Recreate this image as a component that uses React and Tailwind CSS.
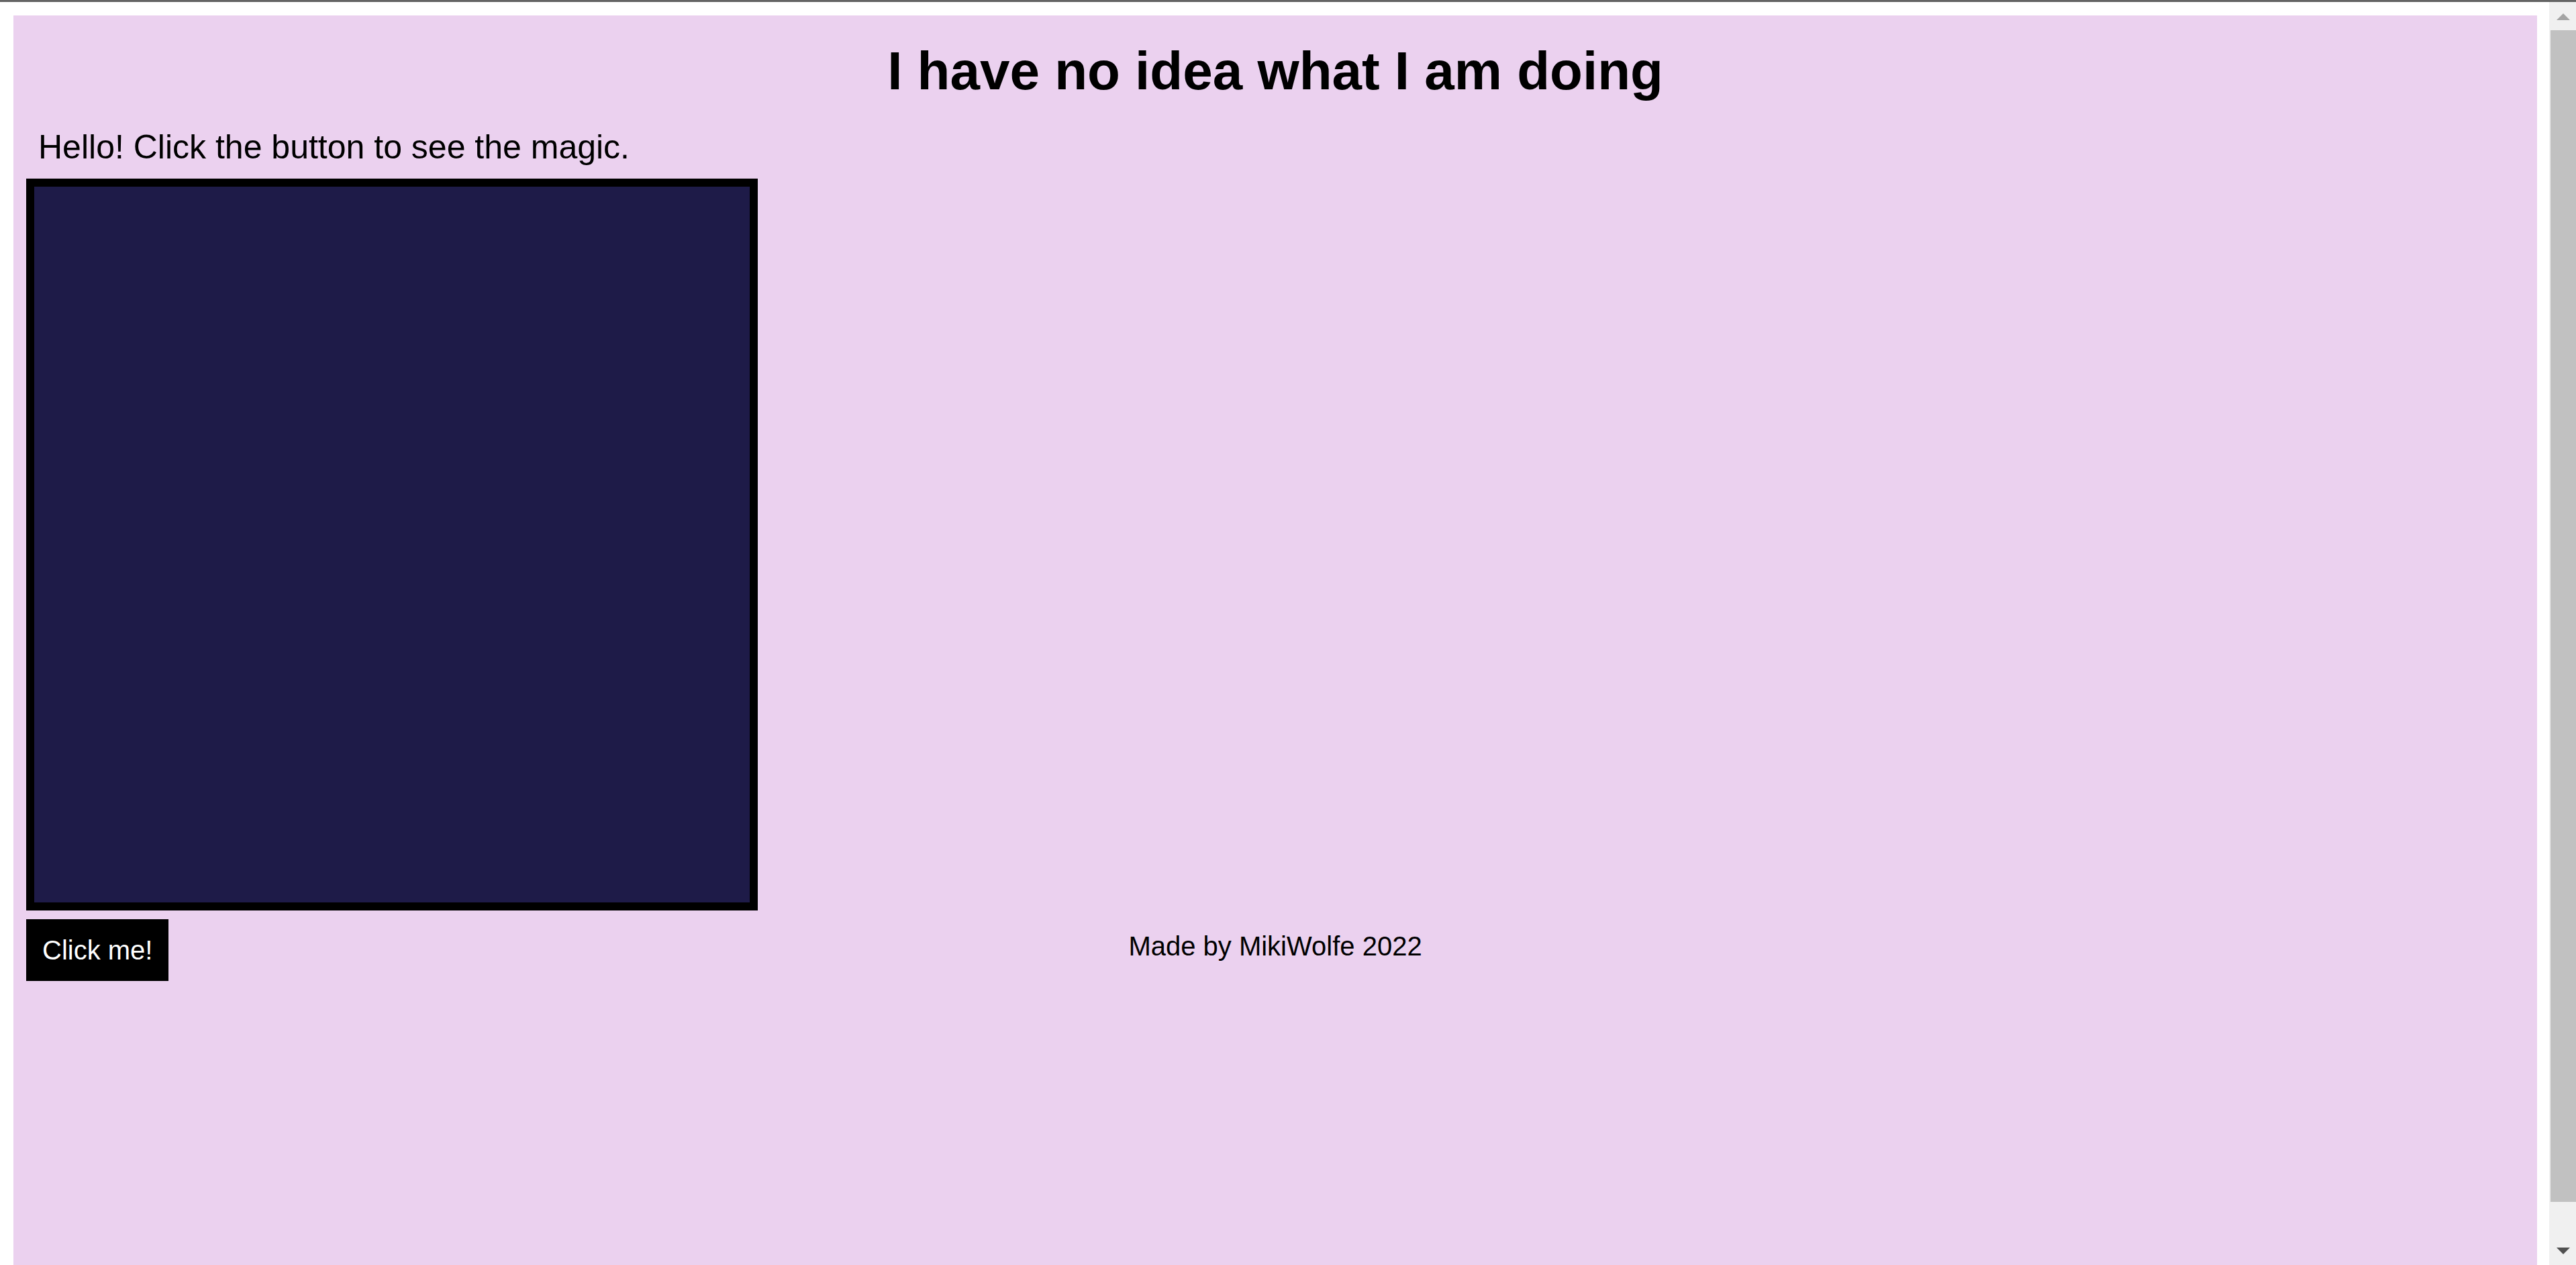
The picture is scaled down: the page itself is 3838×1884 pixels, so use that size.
import React from 'react';

const ScrollBar = () => (
    <div className='w-[40px] bg-[#f0f0f0] flex flex-col'>
        <div className='h-[42px] flex items-start justify-center pt-[17px] pl-[2px]'>
            <div className='w-0 h-0 border-l-[10px] border-r-[10px] border-b-[10px] border-l-transparent border-r-transparent border-b-[#a3a3a3]' />
        </div>
        <div className='ml-[2px] h-[1745px] bg-[#c1c1c1]' />
        <div className='flex-1 flex items-end justify-center pb-[16px] pl-[2px]'>
            <div className='w-0 h-0 border-l-[10px] border-r-[10px] border-t-[10px] border-l-transparent border-r-transparent border-t-[#505050]' />
        </div>
    </div>
);

const App = () => {
    return (
        <div className='w-[3838px] h-[1884px] bg-white flex flex-col overflow-hidden font-["Liberation_Sans",Arial,sans-serif] text-black'>
            <div className='h-[3px] bg-[#646464]' />
            <div className='flex flex-1 min-h-0'>
                <div className='flex-1 pl-[20px] pr-[18px] pt-[20px]'>
                    {/* page body */}
                    <div className='h-full bg-[#ebd1ef] px-[19px] pt-[37px]'>
                        <h1 className='text-center text-[80px] leading-[92px] font-bold'>I have no idea what I am doing</h1>
                        <p className='mt-[38px] pl-[18px] text-[50px] leading-[58px]'>Hello! Click the button to see the magic.</p>

                        <div className='mt-[18px] w-[1090px] h-[1090px] border-[12px] border-black bg-[#1e1b48]' />

                        <div className='mt-[13px] grid grid-cols-[1fr_auto_1fr] items-start'>
                            <div>
                                <button className='bg-black text-white text-[40px] leading-[46px] px-[24px] py-[23px]'>Click me!</button>
                            </div>
                            <p className='pt-[17px] text-[40px] leading-[46px] text-center'>Made by MikiWolfe 2022</p>
                            <div />
                        </div>
                    </div>
                </div>
                <ScrollBar />
            </div>
        </div>
    );
};

export default App;
